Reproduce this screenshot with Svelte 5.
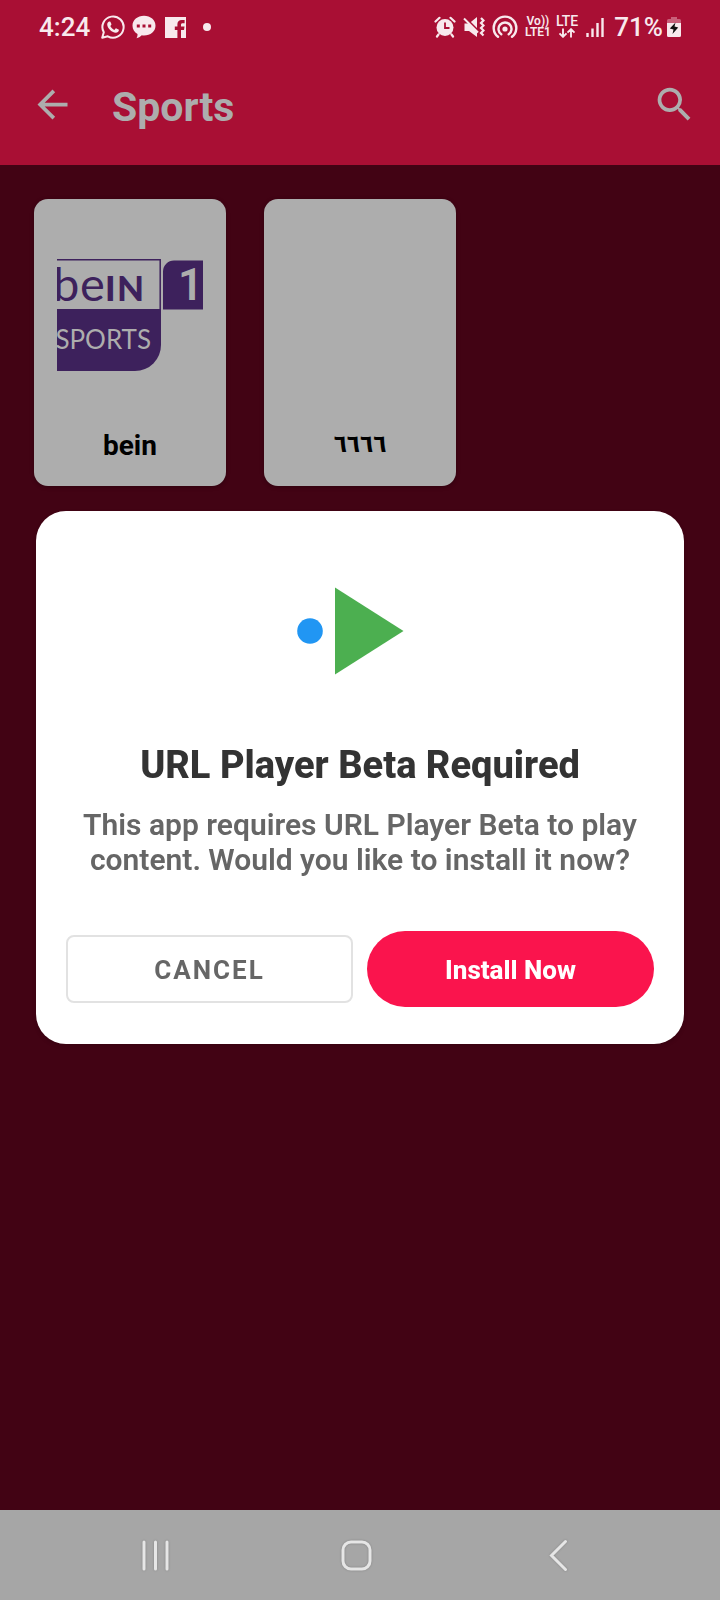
<script>
  const channels = [
    { name: 'bein', logo: true, arabic: false },
    { name: '٦٦٦٦', logo: false, arabic: true }
  ];
  let open = $state(true);
  const close = () => (open = false);
</script>

<div class="screen">
  <div class="top">
    <div class="status">
      <div class="left">
        <span class="clock">4:24</span>
        <svg width="24" height="24" viewBox="0 0 24 24" aria-hidden="true">
          <path d="M1.2 22.8 2.8 17.3A10.6 10.6 0 1 1 6.8 21.3Z" fill="none" stroke="#f8e9ed" stroke-width="2" stroke-linejoin="round" />
          <path d="M8.6 6.4c.4 0 .7.1.9.6l.9 2.1c.1.4 0 .7-.2.9l-.9 1.1c.9 1.8 2.2 3 4.1 3.9l1.2-1.4c.2-.3.5-.3.8-.2l2.1 1.1c.4.2.5.4.4.8-.2 1.600-1.500 2.500-3 2.500-4.500-.3-8.600-4.600-8.700-8.500 0-1.300.9-2.900 2.400-2.900Z" fill="#f8e9ed" />
        </svg>
        <svg width="24" height="24" viewBox="0 0 24 24" aria-hidden="true">
          <path d="M12 .8c6.500 0 11.500 4.300 11.500 9.900S18.500 20.500 12 20.500c-.8 0-1.500 0-2.200-.2-1.500 1.500-3.500 2.700-5.300 2.900.8-1.400 1.100-2.600 1-4.200C2.400 17.200.5 14.200.5 10.700.5 5.100 5.500.8 12 .8Z" fill="#f8e9ed" />
          <path d="M4.800 9.500h3v3h-3zM10.500 9.500h3v3h-3zM16.200 9.500h3v3h-3z" fill="#a90f34" />
        </svg>
        <svg width="24" height="24" viewBox="0 0 24 24" aria-hidden="true">
          <path d="M2 2h21v21h-5v-8h3l.5-3.500H18V9.800c0-1 .4-1.600 1.700-1.600h1.900V5h-2.800c-3 0-4.400 1.700-4.400 4.300v2.200h-2.600V15h2.600v8H2Z" fill="#f8e9ed" />
        </svg>
        <span class="dot"></span>
      </div>
      <div class="right">
        <svg width="22" height="22" viewBox="0 0 22 22" aria-hidden="true">
          <circle cx="11" cy="11.500" r="8.500" fill="#f8e9ed" />
          <path d="M1.500 5.500 5.500 1.800M20.500 5.500 16.500 1.800M4.500 18.500l-1.500 2M17.500 18.500l1.500 2" stroke="#f8e9ed" stroke-width="2.200" stroke-linecap="round" />
          <path d="M11 6.500v5.500h4.500" fill="none" stroke="#a90f34" stroke-width="1.800" />
        </svg>
        <svg width="22" height="22" viewBox="0 0 22 22" aria-hidden="true">
          <path d="M1.500 7.500H6L14 1v20l-8-6H1.500Z" fill="#f8e9ed" />
          <path d="M2 1.500 15 14.500" stroke="#a90f34" stroke-width="2" />
          <path d="M1 2.500 15 16.500" stroke="#f8e9ed" stroke-width="2" />
          <path d="m18 2 2.500 2.500L18 7l2.500 2.500L18 12l2.500 2.500L18 17l2.500 2.500" fill="none" stroke="#f8e9ed" stroke-width="2.200" />
        </svg>
        <svg width="26" height="24" viewBox="0 0 26 24" aria-hidden="true">
          <circle cx="13" cy="14" r="2.600" fill="#f8e9ed" />
          <path d="M9.300 19.300A6.500 6.500 0 1 1 16.700 19.300M6 21.800A11.300 11.300 0 1 1 20 21.800" fill="none" stroke="#f8e9ed" stroke-width="2.400" stroke-linecap="round" />
        </svg>
        <span class="stack volte"><span>Vo))</span><span>LTE1</span></span>
        <span class="stack lte">
          <span>LTE</span>
          <svg width="18" height="10" viewBox="0 0 18 10" aria-hidden="true">
            <path d="M5 .5v8M1.500 5.300 5 8.800l3.500-3.500M13 9.500v-8M9.500 4.700 13 1.200l3.500 3.500" fill="none" stroke="#f8e9ed" stroke-width="1.900" />
          </svg>
        </span>
        <svg width="20" height="22" viewBox="0 0 20 22" aria-hidden="true">
          <path d="M2.500 17v4M7.500 12.500V21M12.500 7V21M17.500 2v19" stroke="#f8e9ed" stroke-width="2.400" />
        </svg>
        <span class="percent">71%</span>
        <svg width="14" height="22" viewBox="0 0 14 22" aria-hidden="true">
          <path d="M4 1h6v2h2.500A1.500 1.500 0 0 1 14 4.500V8H0V4.500A1.500 1.500 0 0 1 1.500 3H4Z" fill="#c95f79" />
          <path d="M0 7h14v12.500a1.500 1.500 0 0 1-1.500 1.500h-11A1.500 1.500 0 0 1 0 19.500Z" fill="#f8e9ed" />
          <path d="M8.500 6.500 2.800 12.500l3.700 1L5.500 18l5.700-6.500-3.700-1Z" fill="#111" />
        </svg>
      </div>
    </div>
    <header>
      <button class="icon" aria-label="Back">
        <svg width="45" height="45" viewBox="0 0 24 24"><path d="M20 11H7.830l5.590-5.590L12 4l-8 8 8 8 1.410-1.410L7.830 13H20v-2z" fill="#adadad" /></svg>
      </button>
      <h1>Sports</h1>
      <button class="icon" aria-label="Search">
        <svg width="45" height="45" viewBox="0 0 24 24"><path d="M15.500 14h-.790l-.280-.270A6.471 6.471 0 0 0 16 9.500 6.500 6.500 0 1 0 9.500 16c1.610 0 3.090-.590 4.230-1.570l.270.280v.790l5 4.990L20.490 19l-4.990-5zm-6 0C7.010 14 5 11.990 5 9.500S7.010 5 9.500 5 14 7.010 14 9.500 11.990 14 9.500 14z" fill="#adadad" /></svg>
      </button>
    </header>
  </div>

  <main>
    {#each channels as channel}
      <button class="card">
        <span class="art">
          {#if channel.logo}
            <svg width="146" height="112" viewBox="0 0 146 112" role="img" aria-label="beIN Sports 1">
              <path d="M0 .8H103.200V50" fill="none" stroke="#3d215c" stroke-width="1.500" />
              <path d="M0 50H104V86A26 26 0 0 1 78 112H0Z" fill="#3d215c" />
              <path d="M106 50.500V12.500A11 11 0 0 1 117 1.500H146V50.500Z" fill="#3d215c" />
              <g fill="#3d215c">
                <text class="thin" x="-4" y="42">b</text>
                <text class="thin" x="23" y="42">e</text>
                <text class="thick" x="48" y="42">I</text>
                <text class="thick" x="60" y="42">N</text>
              </g>
              <text class="sports" x="94" y="90" text-anchor="end">SPORTS</text>
              <text class="one" x="121" y="41">1</text>
            </svg>
          {/if}
        </span>
        <span class="name" class:arabic={channel.arabic}>{channel.name}</span>
      </button>
    {/each}
  </main>

  <nav aria-label="System">
    <button aria-label="Recent apps">
      <svg width="48" height="48" viewBox="0 0 48 48"><path d="M12 11v27M23.500 11v27M35 11v27" stroke="#e6e6e6" stroke-width="3" stroke-linecap="round" /></svg>
    </button>
    <button aria-label="Home">
      <svg width="48" height="48" viewBox="0 0 48 48"><rect x="10" y="11" width="27" height="27" rx="8" fill="none" stroke="#e6e6e6" stroke-width="3" /></svg>
    </button>
    <button aria-label="Back">
      <svg width="48" height="48" viewBox="0 0 48 48"><path d="M31.500 10.500 17.500 24.500 31.500 38.500" fill="none" stroke="#e6e6e6" stroke-width="3" stroke-linecap="round" /></svg>
    </button>
  </nav>

  {#if open}
    <div class="overlay">
      <div class="dialog" role="dialog" aria-modal="true" aria-labelledby="dialog-title">
        <svg class="mark" width="120" height="120" viewBox="0 0 120 120" aria-hidden="true">
          <circle cx="10" cy="60" r="12.800" fill="#2196f3" />
          <path d="M35 16.500 103.500 60 35 103.500Z" fill="#4caf50" />
        </svg>
        <h2 id="dialog-title">URL Player Beta Required</h2>
        <p>This app requires URL Player Beta to play content. Would you like to install it now?</p>
        <div class="actions">
          <button class="cancel" onclick={close}>CANCEL</button>
          <button class="install" onclick={close}>Install Now</button>
        </div>
      </div>
    </div>
  {/if}
</div>

<style>
  :global(body) {
    margin: 0;
    background: #420314;
  }
  .screen {
    min-height: 100vh;
    display: flex;
    flex-direction: column;
    background: #420314;
    font-family: Roboto, 'DejaVu Sans', sans-serif;
  }
  button {
    border: 0;
    padding: 0;
    background: none;
    font-family: inherit;
    cursor: pointer;
  }
  svg {
    display: block;
    flex: none;
  }
  h1, h2, p {
    margin: 0;
  }
  .top {
    background: #a90f34;
  }
  .status {
    height: 52px;
    box-sizing: border-box;
    padding: 2px 39px 0;
    display: flex;
    align-items: center;
    justify-content: space-between;
    color: #f8e9ed;
    font-size: 26px;
    font-weight: 500;
  }
  .left, .right {
    display: flex;
    align-items: center;
    gap: 7px;
  }
  .clock {
    margin-right: 4px;
  }
  .dot {
    width: 8px;
    height: 8px;
    margin-left: 9px;
    border-radius: 50%;
    background: #f8e9ed;
  }
  .stack {
    display: flex;
    flex-direction: column;
    align-items: center;
    font-size: 12px;
    font-weight: 600;
    line-height: 11px;
  }
  .lte {
    font-size: 14px;
    font-weight: 500;
    gap: 1px;
    margin-left: -2px;
  }
  .percent {
    margin-left: 2px;
    margin-right: -3px;
  }
  header {
    height: 113px;
    box-sizing: border-box;
    padding: 0 23px 8px 30px;
    display: flex;
    align-items: center;
  }
  h1 {
    flex: 1;
    padding-top: 5px;
    margin-left: 37px;
    color: #adadad;
    font-size: 41px;
    font-weight: 700;
  }
  main {
    flex: 1;
    padding: 34px;
    display: flex;
    flex-wrap: wrap;
    align-content: flex-start;
    gap: 38px;
  }
  .card {
    width: 192px;
    height: 287px;
    padding-bottom: 24px;
    display: flex;
    flex-direction: column;
    align-items: center;
    border-radius: 14px;
    background: #adadad;
    box-shadow: 0 1px 4px rgba(0, 0, 0, 0.3);
  }
  .art {
    flex: 1;
    display: flex;
    align-items: center;
  }
  .name {
    color: #000;
    font-size: 28px;
    font-weight: 700;
    line-height: 32px;
  }
  .arabic {
    font-family: 'DejaVu Sans Condensed', 'DejaVu Sans', sans-serif;
    font-size: 24px;
    padding-bottom: 2px;
  }
  .thin {
    font: 400 47px Lato, sans-serif;
  }
  .thick {
    font: 900 35px Lato, sans-serif;
  }
  .sports {
    font: 400 26px Lato, sans-serif;
    fill: #adadad;
  }
  .one {
    font: 600 44px Roboto, sans-serif;
    fill: #adadad;
  }
  nav {
    height: 90px;
    box-sizing: border-box;
    padding-right: 6px;
    display: flex;
    align-items: center;
    justify-content: center;
    gap: 153px;
    background: #a6a6a6;
  }
  nav svg {
    filter: drop-shadow(0 0 1px rgba(0, 0, 0, 0.2));
  }
  .overlay {
    position: fixed;
    inset: 0;
    padding: 45px 36px 90px;
    display: flex;
    align-items: center;
    justify-content: center;
  }
  .dialog {
    width: 100%;
    box-sizing: border-box;
    padding: 60px 30px 37px;
    border-radius: 30px;
    background: #fff;
    box-shadow: 0 2px 4px rgba(0, 0, 0, 0.15);
    text-align: center;
  }
  .mark {
    margin: 0 auto;
    overflow: visible;
  }
  h2 {
    margin-top: 52px;
    color: #333;
    font-size: 38px;
    font-weight: 800;
    line-height: 45px;
  }
  p {
    margin-top: 19px;
    color: #666;
    font-size: 30px;
    font-weight: 600;
    line-height: 35px;
  }
  .actions {
    margin-top: 54px;
    display: grid;
    grid-template-columns: 1fr 1fr;
    align-items: center;
    gap: 14px;
  }
  .actions button {
    box-sizing: border-box;
    padding-top: 2px;
    font-size: 26px;
    font-weight: 700;
  }
  .cancel {
    height: 68px;
    border: 2px solid #e2e2e2;
    border-radius: 8px;
    color: #666;
    letter-spacing: 2px;
  }
  .actions .install {
    height: 76px;
    border-radius: 38px;
    background: #fa144d;
    color: #fff;
    font-weight: 800;
  }
</style>
